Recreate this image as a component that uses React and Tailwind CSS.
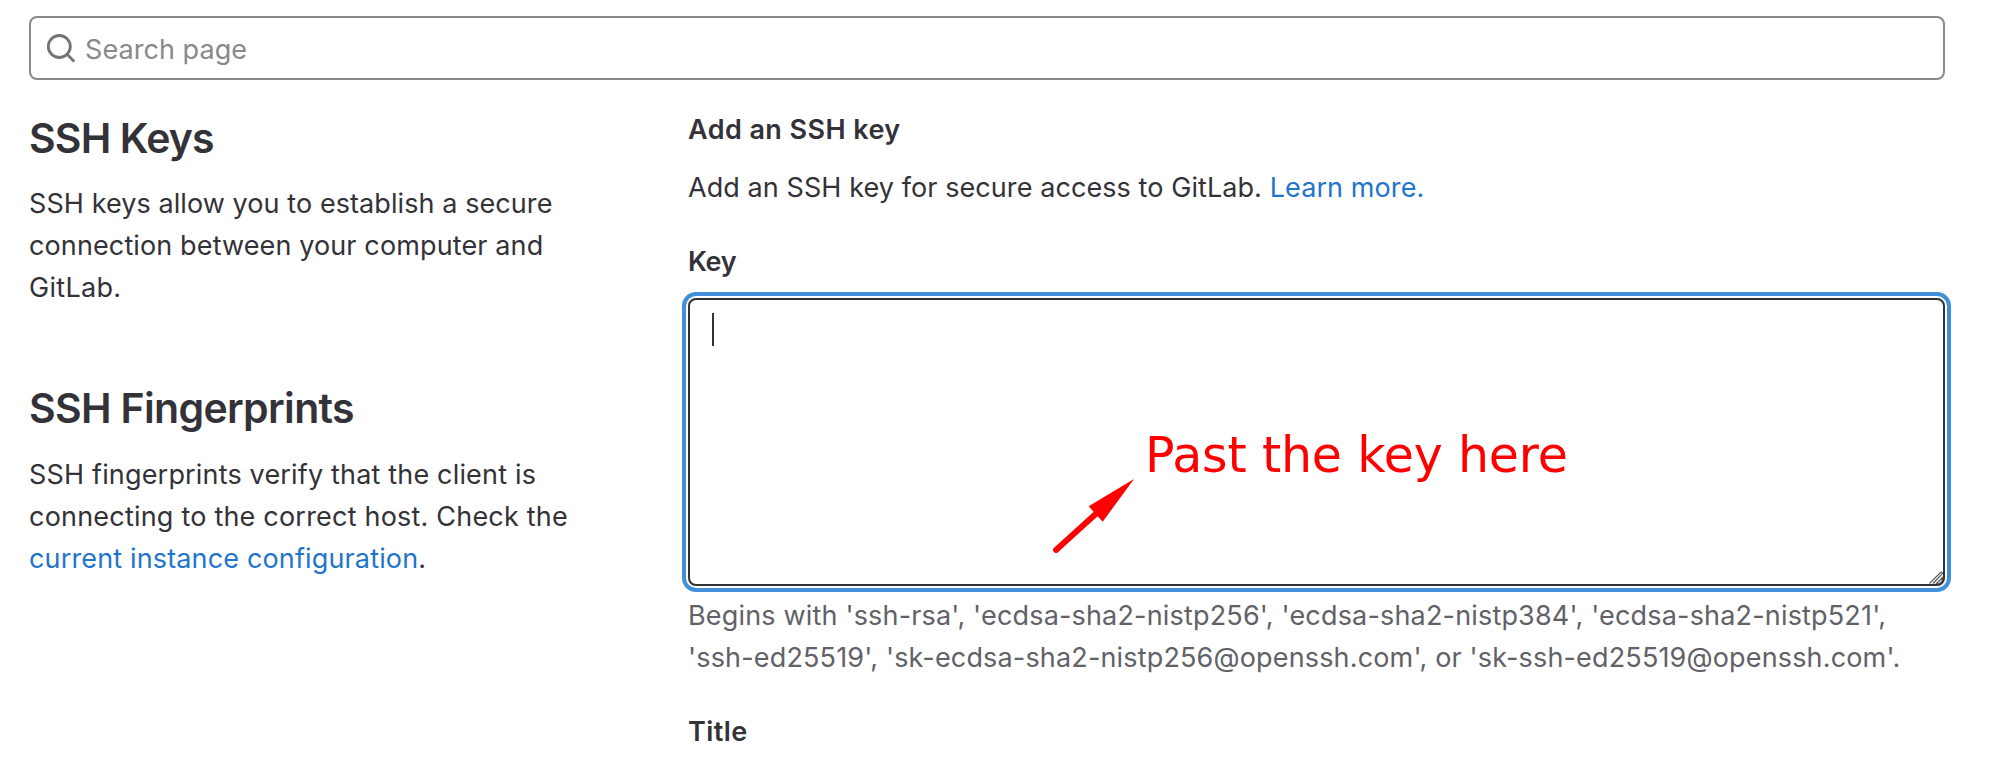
function SearchIcon() {
  return (
    <svg className="block size-8 shrink-0" viewBox="0 0 32 32" fill="none" stroke="#737278" strokeWidth="2.8" strokeLinecap="round">
      <circle cx="14.3" cy="14.5" r="11" />
      <path d="M22.2 22.5 28.5 28.8" />
    </svg>
  );
}

function SearchBox() {
  return (
    <div className="flex h-16 items-center rounded-lg border-2 border-[#89888d] pl-[14px]">
      <SearchIcon />
      <span className="mt-1 ml-2 leading-[42px] tracking-[0.06px] text-[#89888d]">Search page</span>
    </div>
  );
}

function Sidebar() {
  return (
    <aside className="w-[659px] shrink-0">
      <section>
        <h2 className="text-[41px] leading-[48px] font-semibold tracking-[-0.85px]">SSH Keys</h2>
        <p className="mt-[21px] whitespace-nowrap">
          <span className="block tracking-[0.08px]">SSH keys allow you to establish a secure</span>
          <span className="block tracking-[0.12px]">connection between your computer and</span>
          <span className="block tracking-[0.3px]">GitLab.</span>
        </p>
      </section>
      <section className="mt-[75px]">
        <h2 className="text-[41px] leading-[48px] font-semibold tracking-[-0.66px]">SSH Fingerprints</h2>
        <p className="mt-[22px] whitespace-nowrap">
          <span className="block tracking-[0.17px]">SSH fingerprints verify that the client is</span>
          <span className="block tracking-[0.205px]">connecting to the correct host. Check the</span>
          <span className="block tracking-[0.147px]">
            <a className="text-[#1f75cb]">current instance configuration</a>.
          </span>
        </p>
      </section>
    </aside>
  );
}

function KeyField() {
  return (
    <div className="relative mt-[15px] h-72 rounded-lg border-2 border-[#333238] pt-[13px] pl-[22px] shadow-[0_0_0_2px_#fff,0_0_0_6px_#428fdc]">
      <div className="h-[33px] w-0.5 bg-[#333238]" />
      <svg className="absolute right-0 bottom-0 size-[14px]" viewBox="0 0 14 14" fill="none" stroke="#5c5b60" strokeWidth="1.2">
        <path d="M0.5 13.5 11 3Q13.5 1.2 13.5 3.5L4 13.5" />
        <path d="M7.5 13.5 13.5 7.5V10.5L10.5 13.5Z" />
      </svg>
      <svg className="absolute top-[177px] left-[362px] h-20 w-[84px]" viewBox="0 0 84 80" fill="#f00">
        <path d="M4 73 47 34" stroke="#f00" strokeWidth="5.8" strokeLinecap="round" />
        <path d="M82 2 36.7 29.3 50.7 44.7Z" />
      </svg>
      <span className="absolute top-[127px] left-[455px] font-['DejaVu_Sans'] text-[49px] leading-[57px] tracking-[-0.16px] whitespace-nowrap text-[#f00]">
        Past the key here
      </span>
    </div>
  );
}

function KeyForm() {
  return (
    <main className="-mt-[5px] min-w-0 flex-1">
      <h4 className="font-semibold tracking-[0.42px]">Add an SSH key</h4>
      <p className="mt-4 whitespace-nowrap">
        <span className="tracking-[0.08px]">Add an SSH key for secure access to GitLab. </span>
        <a className="tracking-[0.1px] text-[#1f75cb]">Learn more.</a>
      </p>
      <div className="mt-8 font-semibold tracking-[-0.3px]">Key</div>
      <KeyField />
      <p className="mt-[9px] whitespace-nowrap text-[#626168]">
        <span className="block tracking-[0.173px]">
          Begins with 'ssh-rsa', 'ecdsa-sha2-nistp256', 'ecdsa-sha2-nistp384', 'ecdsa-sha2-nistp521',
        </span>
        <span className="block tracking-[0.16px]">
          'ssh-ed25519', 'sk-ecdsa-sha2-nistp256@openssh.com', or 'sk-ssh-ed25519@openssh.com'.
        </span>
      </p>
      <div className="mt-8 font-semibold tracking-[0.4px]">Title</div>
    </main>
  );
}

export default function App() {
  return (
    <div className="h-[758px] overflow-hidden bg-white pt-4 pr-[57px] pl-[29px] font-['Inter','Liberation_Sans',sans-serif] text-[27px] leading-[42px] text-[#333238]">
      <SearchBox />
      <div className="mt-[34px] flex">
        <Sidebar />
        <KeyForm />
      </div>
    </div>
  );
}
